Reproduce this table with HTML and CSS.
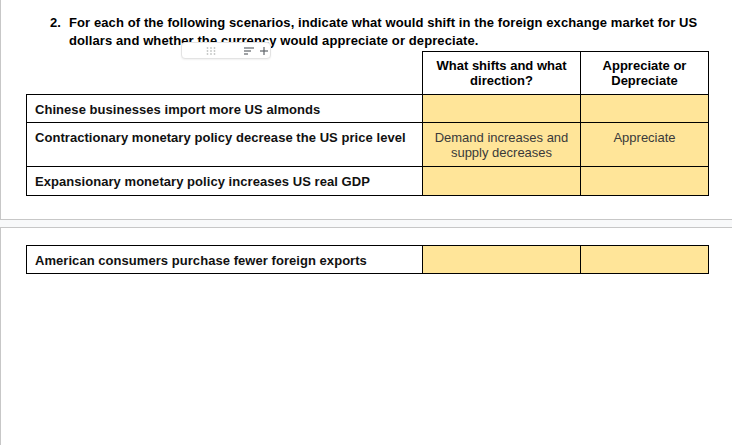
FILE: index.html
```html
<!DOCTYPE html>
<html>
<head>
<meta charset="utf-8">
<link rel="stylesheet" href="styles.css">
</head>
<body>
<div class="page page-one">
  <div class="question">
    <span class="num">2.</span>
    <p class="qtext">For each of the following scenarios, indicate what would shift in the foreign exchange market for US dollars and whether the currency would appreciate or depreciate.</p>
  </div>
  <div class="widget">
    <svg class="grip" width="10" height="8" viewBox="0 0 10 8"><g fill="#c4c7c5"><circle cx="1.5" cy="1" r="0.9"/><circle cx="5" cy="1" r="0.9"/><circle cx="8.5" cy="1" r="0.9"/><circle cx="1.5" cy="4" r="0.9"/><circle cx="5" cy="4" r="0.9"/><circle cx="8.5" cy="4" r="0.9"/><circle cx="1.5" cy="7" r="0.9"/><circle cx="5" cy="7" r="0.9"/><circle cx="8.5" cy="7" r="0.9"/></g></svg>
    <svg class="sort" width="10" height="8" viewBox="0 0 10 8"><g stroke="#5f6368" stroke-width="1.2"><line x1="0" y1="1" x2="10" y2="1"/><line x1="0" y1="4" x2="7" y2="4"/><line x1="0" y1="7" x2="4" y2="7"/></g></svg>
    <svg class="plus" width="8" height="8" viewBox="0 0 8 8"><g stroke="#5f6368" stroke-width="1.2"><line x1="4" y1="0" x2="4" y2="8"/><line x1="0" y1="4" x2="8" y2="4"/></g></svg>
  </div>
  <table class="grid">
    <colgroup><col class="c1"><col class="c2"><col class="c3"></colgroup>
    <tr class="head">
      <td class="blank"></td>
      <th>What shifts and what direction?</th>
      <th>Appreciate or Depreciate</th>
    </tr>
    <tr class="r1">
      <td class="label">Chinese businesses import more US almonds</td>
      <td class="ans"></td>
      <td class="ans"></td>
    </tr>
    <tr class="r2">
      <td class="label">Contractionary monetary policy decrease the US price level</td>
      <td class="ans">Demand increases and supply decreases</td>
      <td class="ans">Appreciate</td>
    </tr>
    <tr class="r3">
      <td class="label">Expansionary monetary policy increases US real GDP</td>
      <td class="ans"></td>
      <td class="ans"></td>
    </tr>
  </table>
</div>
<div class="page page-two">
  <table class="grid">
    <colgroup><col class="c1"><col class="c2"><col class="c3"></colgroup>
    <tr class="r4">
      <td class="label">American consumers purchase fewer foreign exports</td>
      <td class="ans"></td>
      <td class="ans"></td>
    </tr>
  </table>
</div>
</body>
</html>
```
FILE: styles.css
```css
html, body {
  margin: 0;
  padding: 0;
}
body {
  background: #f8f9fa;
  font-family: "Liberation Sans", Arial, sans-serif;
  color: #000;
  width: 732px;
  height: 445px;
  overflow: hidden;
}
.page {
  background: #fff;
  border-left: 1px solid #c7c7c7;
  position: relative;
}
.page-one {
  border-bottom: 1px solid #c7c7c7;
  padding-top: 14px;
  box-sizing: border-box;
  height: 220px;
}
.page-two {
  margin-top: 7px;
  border-top: 1px solid #c7c7c7;
  height: 240px;
  padding-top: 17px;
  box-sizing: border-box;
}
.question {
  display: flex;
  padding-left: 49px;
  padding-right: 28px;
  font-size: 13px;
  font-weight: bold;
  line-height: 18px;
  letter-spacing: 0.1px;
}
.num {
  width: 19px;
  flex: none;
}
.qtext {
  margin: 0;
}
.widget {
  position: absolute;
  left: 180px;
  top: 42px;
  width: 88px;
  height: 15px;
  background: #fff;
  border: 1px solid #e3e3e3;
  border-radius: 4px;
  display: flex;
  align-items: center;
  box-shadow: 0 1px 2px rgba(0,0,0,0.06);
}
.grip { margin-left: 24px; }
.sort { margin-left: 28px; }
.plus { margin-left: 6px; }
.grid {
  border-collapse: collapse;
  margin-left: 25px;
  margin-top: 1px;
  table-layout: fixed;
  width: 683px;
  font-size: 13px;
  line-height: 15px;
}
.c1 { width: 396px; }
.c2 { width: 158px; }
.c3 { width: 128px; }
.grid td, .grid th {
  border: 1px solid #000;
  padding: 7px 8px 5px;
  vertical-align: top;
}
.grid .blank {
  border: none;
  border-bottom: 1px solid #000;
}
.grid th {
  font-weight: bold;
  text-align: center;
  padding: 6px 6px 5px;
  height: 31px;
}
.label {
  font-weight: 600;
  color: #111;
  letter-spacing: 0.05px;
}
.ans {
  background: #ffe599;
  text-align: center;
  color: #3a3a3a;
}
.r1 td { height: 15px; }
.r2 td { height: 31px; }
.r3 td { height: 16px; }
.r4 td { height: 14px; }
.page-two .grid { margin-top: 0; }
```
